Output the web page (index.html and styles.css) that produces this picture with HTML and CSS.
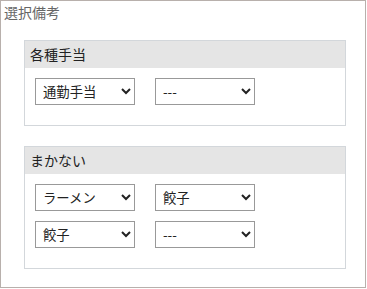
FILE: index.html
```html
<!DOCTYPE html>
<html lang="ja">
<head>
    <meta charset="UTF-8">
    <meta name="viewport" content="width=device-width, initial-scale=1.0">
    <title>選択備考</title>
    <link rel="stylesheet" href="styles.css">
</head>
<body>
    <div class="frame">
        <div class="frame-title">選択備考</div>

        <div class="panel">
            <div class="panel-head">各種手当</div>
            <div class="panel-body">
                <select class="pick">
                    <option>通勤手当</option>
                </select>
                <select class="pick">
                    <option>---</option>
                </select>
            </div>
        </div>

        <div class="panel">
            <div class="panel-head">まかない</div>
            <div class="panel-body">
                <select class="pick">
                    <option>ラーメン</option>
                </select>
                <select class="pick">
                    <option>餃子</option>
                </select>
                <select class="pick">
                    <option>餃子</option>
                </select>
                <select class="pick">
                    <option>---</option>
                </select>
            </div>
        </div>
    </div>
</body>
</html>
```

FILE: styles.css
```css
/* 全体 */
body {
    margin: 0;
    font-family: "Noto Sans CJK JP", "Noto Sans", sans-serif;
    background: #fff;
}

.frame {
    box-sizing: border-box;
    width: 366px;
    height: 288px;
    border: 1px solid #b8b0ac;
    padding: 0 19px 0 23px;
}

.frame-title {
    font-size: 14px;
    line-height: 20px;
    color: #666;
    padding: 1px 0 0 3px;
    margin-left: -23px;
    margin-bottom: 18px;
}

/* パネル */
.panel {
    border: 1px solid #d3d7db;
    margin-bottom: 20px;
}

.panel-head {
    background: #e5e5e5;
    height: 27px;
    line-height: 27px;
    font-size: 14px;
    color: #222;
    padding-left: 5px;
}

.panel-body {
    display: grid;
    grid-template-columns: 100px 100px;
    column-gap: 20px;
    row-gap: 10px;
    padding: 10px 10px 20px;
}

/* セレクト */
.pick {
    width: 100px;
    height: 27px;
    border: 1px solid #999;
    border-radius: 0;
    background: #fff;
    color: #222;
    font-family: "Noto Sans CJK JP", "Noto Sans", sans-serif;
    font-size: 13.33px;
    padding: 0 3px 0 3px;
}
```
